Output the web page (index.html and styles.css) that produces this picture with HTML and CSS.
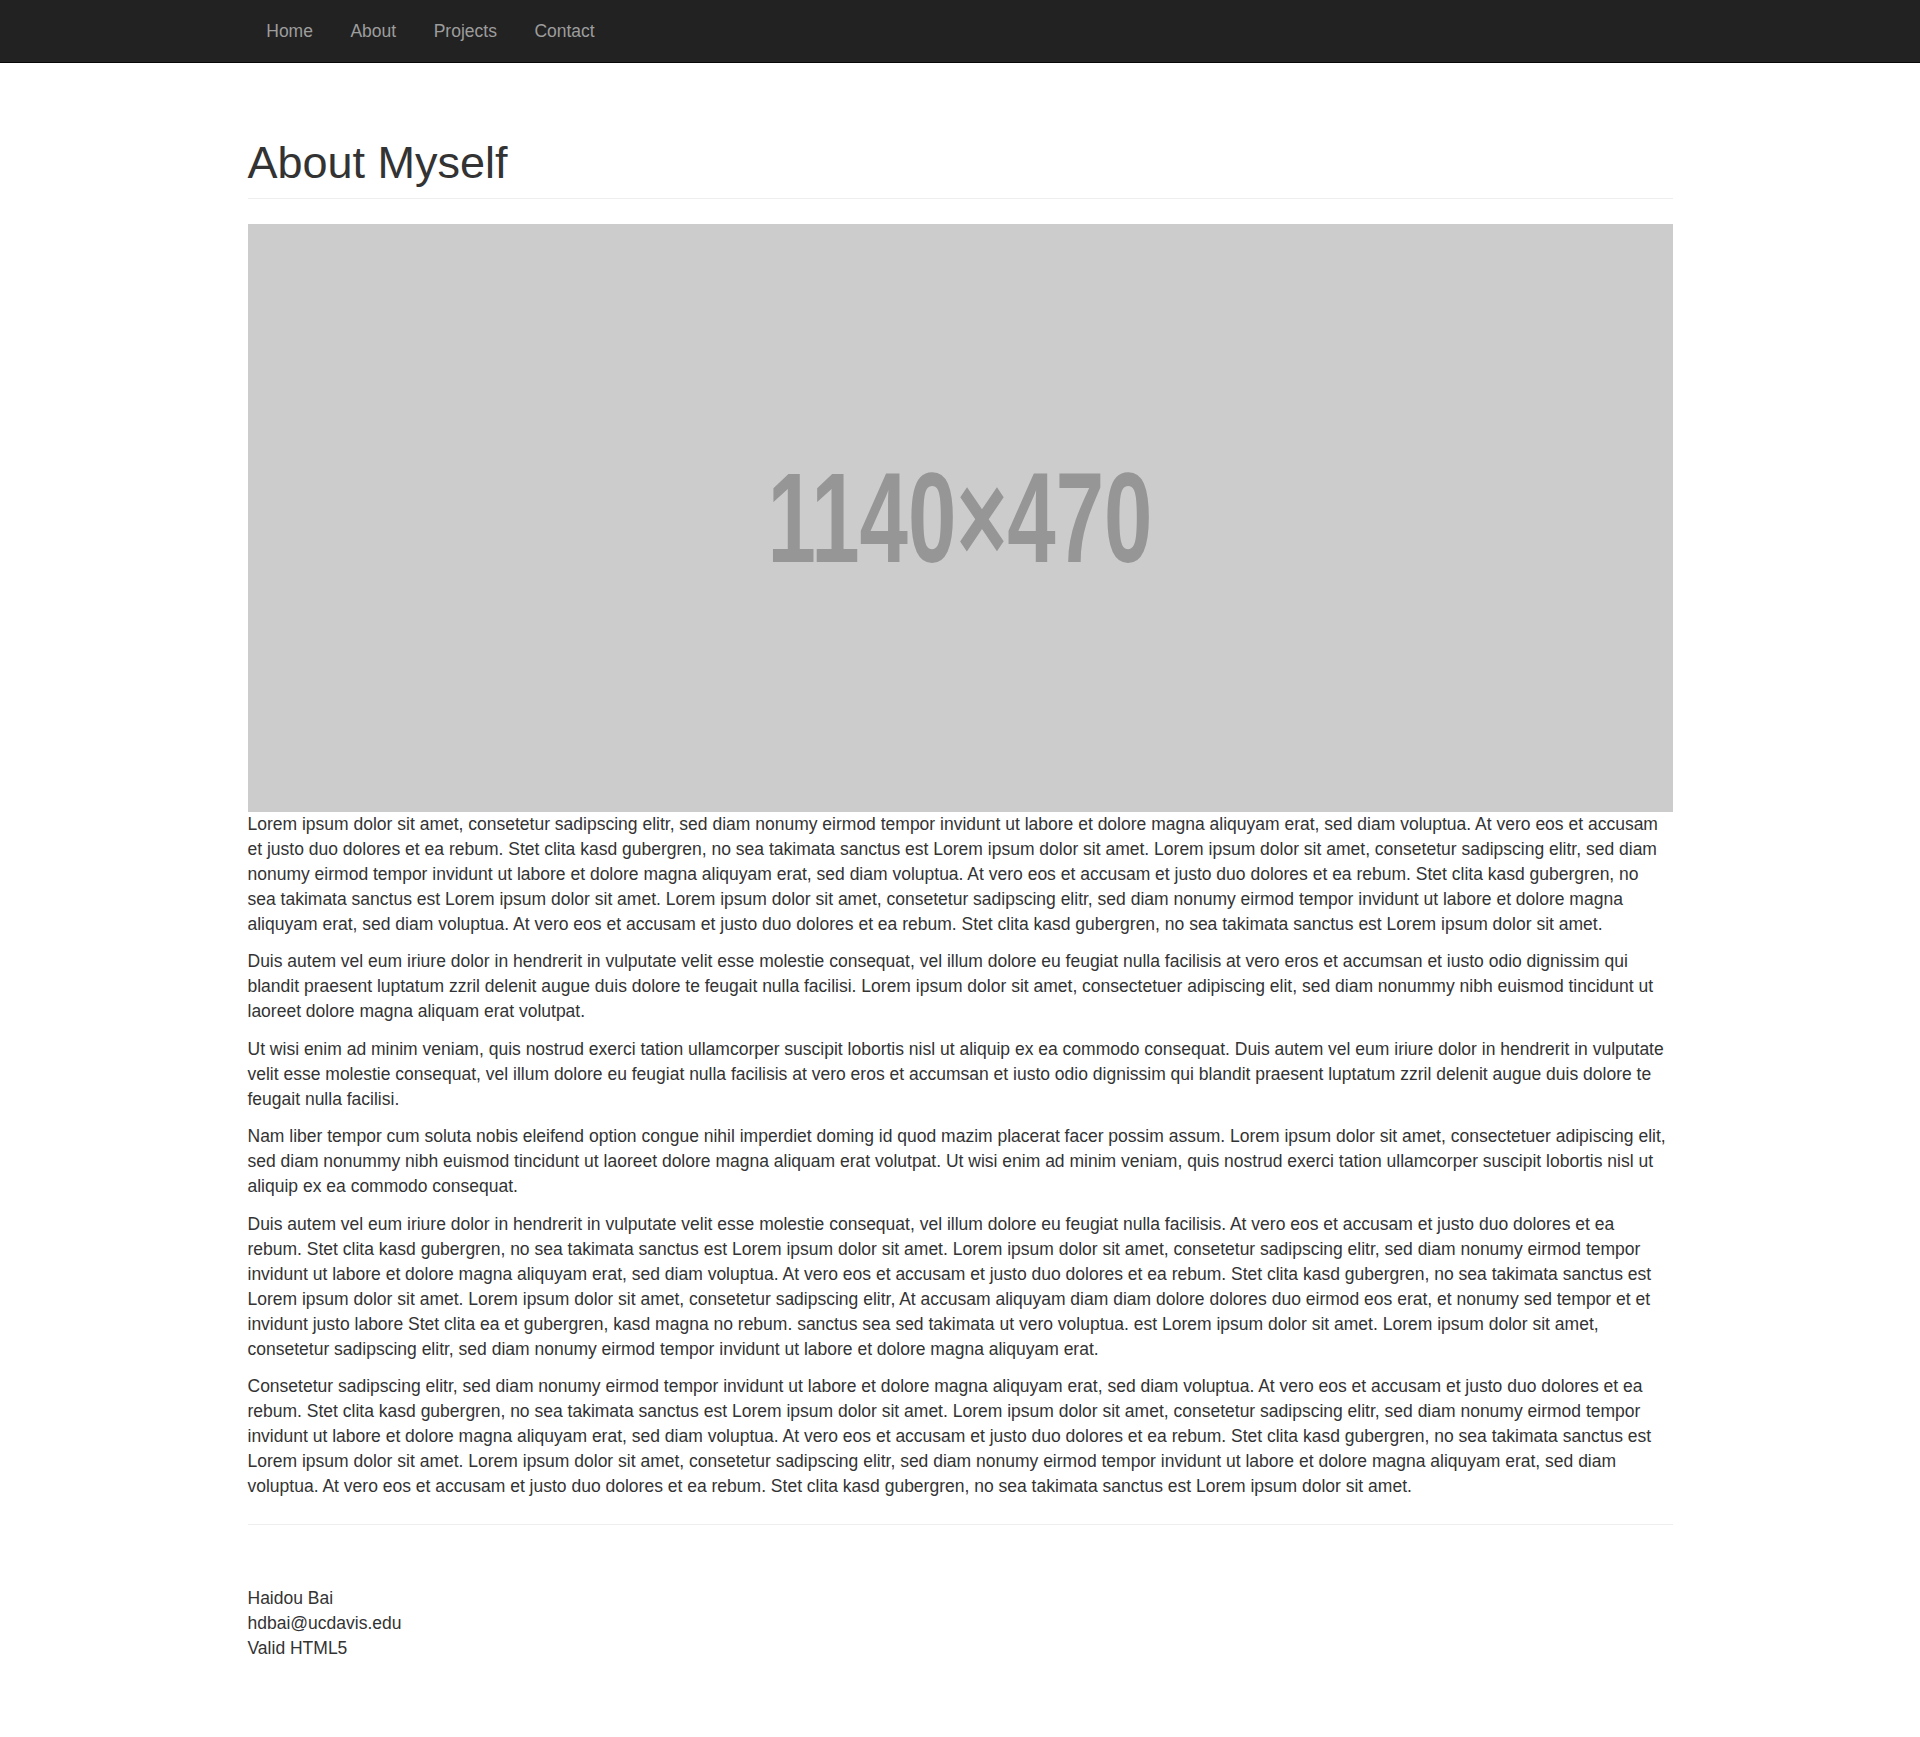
FILE: index.html
```html
<!DOCTYPE html>
<html lang="en">
<head>
<meta charset="utf-8">
<title>About Myself</title>
<link rel="stylesheet" href="styles.css">
</head>
<body>
<nav class="navbar">
  <div class="container">
    <ul class="nav">
      <li><a href="#">Home</a></li>
      <li><a href="#">About</a></li>
      <li><a href="#">Projects</a></li>
      <li><a href="#">Contact</a></li>
    </ul>
  </div>
</nav>
<main class="container main">
  <h1 class="page-header">About Myself</h1>
  <div class="placeholder"><span class="ph-text">1140×470</span></div>
  <p>Lorem ipsum dolor sit amet, consetetur sadipscing elitr, sed diam nonumy eirmod tempor invidunt ut labore et dolore magna aliquyam erat, sed diam voluptua. At vero eos et accusam et justo duo dolores et ea rebum. Stet clita kasd gubergren, no sea takimata sanctus est Lorem ipsum dolor sit amet. Lorem ipsum dolor sit amet, consetetur sadipscing elitr, sed diam nonumy eirmod tempor invidunt ut labore et dolore magna aliquyam erat, sed diam voluptua. At vero eos et accusam et justo duo dolores et ea rebum. Stet clita kasd gubergren, no sea takimata sanctus est Lorem ipsum dolor sit amet. Lorem ipsum dolor sit amet, consetetur sadipscing elitr, sed diam nonumy eirmod tempor invidunt ut labore et dolore magna aliquyam erat, sed diam voluptua. At vero eos et accusam et justo duo dolores et ea rebum. Stet clita kasd gubergren, no sea takimata sanctus est Lorem ipsum dolor sit amet.</p>
  <p>Duis autem vel eum iriure dolor in hendrerit in vulputate velit esse molestie consequat, vel illum dolore eu feugiat nulla facilisis at vero eros et accumsan et iusto odio dignissim qui blandit praesent luptatum zzril delenit augue duis dolore te feugait nulla facilisi. Lorem ipsum dolor sit amet, consectetuer adipiscing elit, sed diam nonummy nibh euismod tincidunt ut laoreet dolore magna aliquam erat volutpat.</p>
  <p>Ut wisi enim ad minim veniam, quis nostrud exerci tation ullamcorper suscipit lobortis nisl ut aliquip ex ea commodo consequat. Duis autem vel eum iriure dolor in hendrerit in vulputate velit esse molestie consequat, vel illum dolore eu feugiat nulla facilisis at vero eros et accumsan et iusto odio dignissim qui blandit praesent luptatum zzril delenit augue duis dolore te feugait nulla facilisi.</p>
  <p>Nam liber tempor cum soluta nobis eleifend option congue nihil imperdiet doming id quod mazim placerat facer possim assum. Lorem ipsum dolor sit amet, consectetuer adipiscing elit, sed diam nonummy nibh euismod tincidunt ut laoreet dolore magna aliquam erat volutpat. Ut wisi enim ad minim veniam, quis nostrud exerci tation ullamcorper suscipit lobortis nisl ut aliquip ex ea commodo consequat.</p>
  <p>Duis autem vel eum iriure dolor in hendrerit in vulputate velit esse molestie consequat, vel illum dolore eu feugiat nulla facilisis. At vero eos et accusam et justo duo dolores et ea rebum. Stet clita kasd gubergren, no sea takimata sanctus est Lorem ipsum dolor sit amet. Lorem ipsum dolor sit amet, consetetur sadipscing elitr, sed diam nonumy eirmod tempor invidunt ut labore et dolore magna aliquyam erat, sed diam voluptua. At vero eos et accusam et justo duo dolores et ea rebum. Stet clita kasd gubergren, no sea takimata sanctus est Lorem ipsum dolor sit amet. Lorem ipsum dolor sit amet, consetetur sadipscing elitr, At accusam aliquyam diam diam dolore dolores duo eirmod eos erat, et nonumy sed tempor et et invidunt justo labore Stet clita ea et gubergren, kasd magna no rebum. sanctus sea sed takimata ut vero voluptua. est Lorem ipsum dolor sit amet. Lorem ipsum dolor sit amet, consetetur sadipscing elitr, sed diam nonumy eirmod tempor invidunt ut labore et dolore magna aliquyam erat.</p>
  <p>Consetetur sadipscing elitr, sed diam nonumy eirmod tempor invidunt ut labore et dolore magna aliquyam erat, sed diam voluptua. At vero eos et accusam et justo duo dolores et ea rebum. Stet clita kasd gubergren, no sea takimata sanctus est Lorem ipsum dolor sit amet. Lorem ipsum dolor sit amet, consetetur sadipscing elitr, sed diam nonumy eirmod tempor invidunt ut labore et dolore magna aliquyam erat, sed diam voluptua. At vero eos et accusam et justo duo dolores et ea rebum. Stet clita kasd gubergren, no sea takimata sanctus est Lorem ipsum dolor sit amet. Lorem ipsum dolor sit amet, consetetur sadipscing elitr, sed diam nonumy eirmod tempor invidunt ut labore et dolore magna aliquyam erat, sed diam voluptua. At vero eos et accusam et justo duo dolores et ea rebum. Stet clita kasd gubergren, no sea takimata sanctus est Lorem ipsum dolor sit amet.</p>
  <hr class="divider">
  <footer class="footer">
    <div>Haidou Bai</div>
    <div>hdbai@ucdavis.edu</div>
    <div>Valid HTML5</div>
  </footer>
</main>
</body>
</html>
```

FILE: styles.css
```css
html, body {
  margin: 0;
  padding: 0;
}
body {
  font-family: "Liberation Sans", Arial, Helvetica, sans-serif;
  font-size: 17.5px;
  line-height: 25px;
  color: #333;
  background: #fff;
}
.container {
  width: 1462.5px;
  margin: 0 auto;
  padding: 0 18.75px;
  box-sizing: border-box;
}
.main {
  display: block;
  padding-top: 25px;
}
.navbar {
  background: #222;
  border-bottom: 1px solid #080808;
  height: 62.5px;
  box-sizing: border-box;
}
.nav {
  list-style: none;
  margin: 0;
  padding: 0;
  display: flex;
}
.nav a {
  display: block;
  padding: 18.75px;
  line-height: 25px;
  color: #9d9d9d;
  text-decoration: none;
}
.page-header {
  font-family: "Liberation Sans", Arial, Helvetica, sans-serif;
  font-size: 45px;
  font-weight: 500;
  line-height: 49.5px;
  color: #333;
  margin: 50px 0 25px;
  padding-bottom: 11.25px;
  border-bottom: 1px solid #eee;
}
.placeholder {
  height: 587.5px;
  background: #ccc;
  display: flex;
  align-items: center;
  justify-content: center;
  overflow: hidden;
}
.ph-text {
  font-family: "Liberation Sans", Arial, sans-serif;
  font-weight: bold;
  font-size: 128px;
  line-height: 1;
  color: #969696;
  transform: scaleX(0.68);
  white-space: nowrap;
}
p {
  margin: 0 0 12.5px;
  padding-right: 3px;
}
.divider {
  margin: 25px 0 0;
  border: 0;
  border-top: 1px solid #eee;
}
.footer {
  margin: 61px 0 62.5px;
}
```
